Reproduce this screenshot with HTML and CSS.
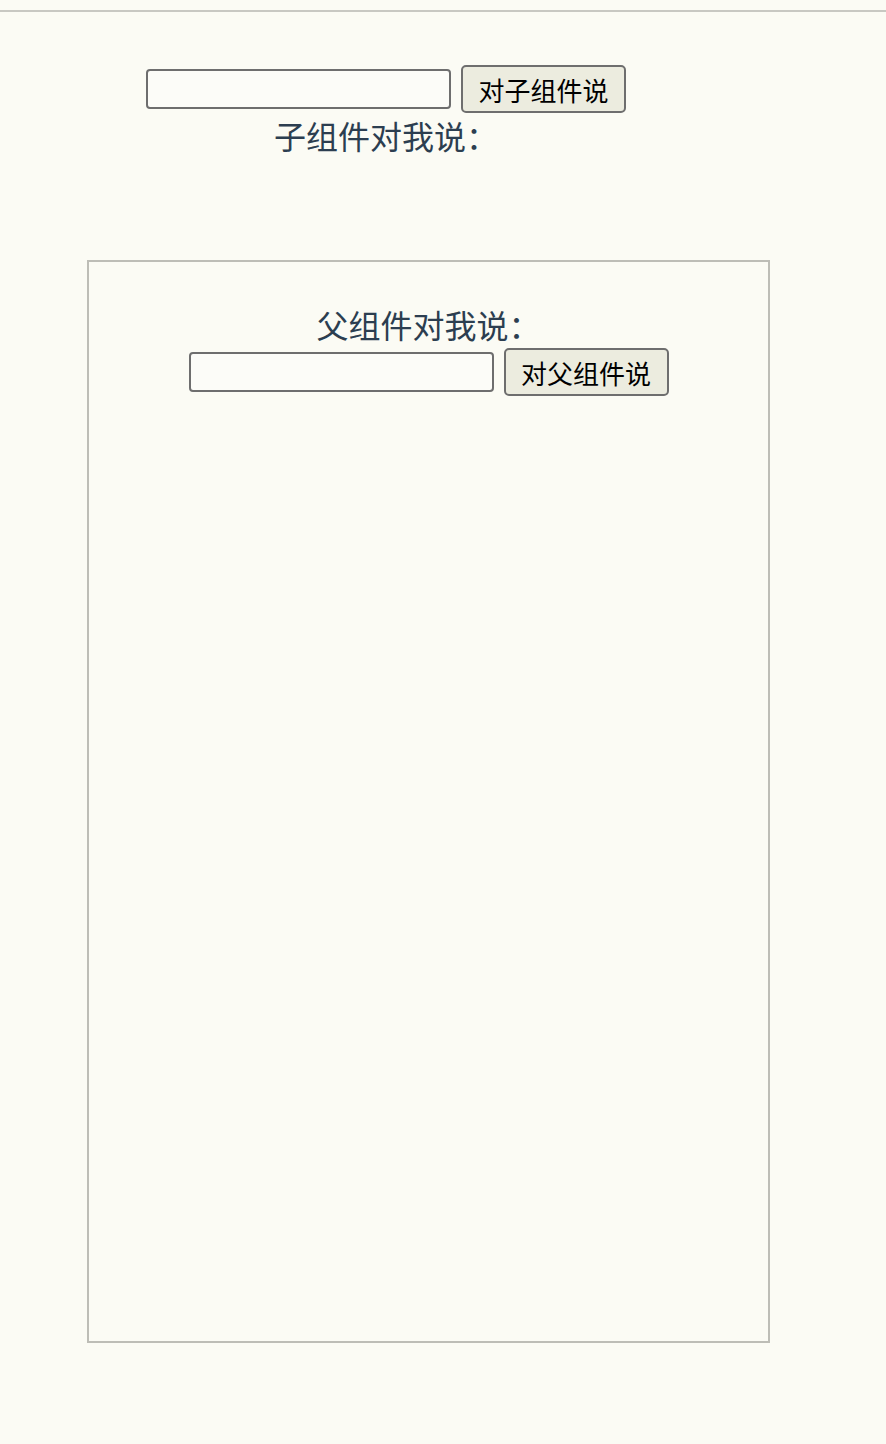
FILE: index.html
```html
<!DOCTYPE html>
<html lang="zh-CN">
<head>
    <meta charset="UTF-8">
    <meta name="viewport" content="width=device-width, initial-scale=1.0">
    <title>父子组件通信</title>
    <link rel="stylesheet" href="styles.css">
</head>
<body>
    <div class="topline"></div>

    <div class="parent">
        <div class="talk">
            <input type="text">
            <button>对子组件说</button>
        </div>
        <p class="heard">子组件对我说：</p>
    </div>

    <div class="child">
        <p class="heard">父组件对我说：</p>
        <div class="talk">
            <input type="text">
            <button>对父组件说</button>
        </div>
    </div>
</body>
</html>
```

FILE: styles.css
```css
* {
    margin: 0;
    padding: 0;
    box-sizing: border-box;
}

body {
    font-family: "Noto Sans CJK SC", "Noto Sans", sans-serif;
    color: #2c3e50;
    background: #fbfbf4;
    min-height: 100vh;
}

.topline {
    margin-top: 10px;
    height: 2px;
    background: #c8c8c2;
}

.parent {
    width: 772px;
    padding-top: 53px;
    text-align: center;
}

.talk {
    display: flex;
    justify-content: center;
    align-items: center;
    gap: 10px;
}

.talk input {
    width: 305px;
    height: 40px;
    border: 2px solid #6e6e6e;
    border-radius: 4px;
    background: #fcfcf8;
    outline: none;
}

.talk button {
    width: 165px;
    height: 48px;
    border: 2px solid #6e6e6e;
    border-radius: 5px;
    background: #ececdf;
    color: #000;
    font-family: "Noto Sans CJK SC", sans-serif;
    font-size: 26px;
    cursor: pointer;
}

.heard {
    font-size: 32px;
    line-height: 44px;
    text-align: center;
}

.parent .heard {
    padding-left: 0;
}

.child {
    margin: 103px 0 0 87px;
    width: 683px;
    height: 1083px;
    border: 2px solid #bdbdb6;
    padding-top: 40px;
}

.child .heard {
    margin-bottom: 2px;
}
```
